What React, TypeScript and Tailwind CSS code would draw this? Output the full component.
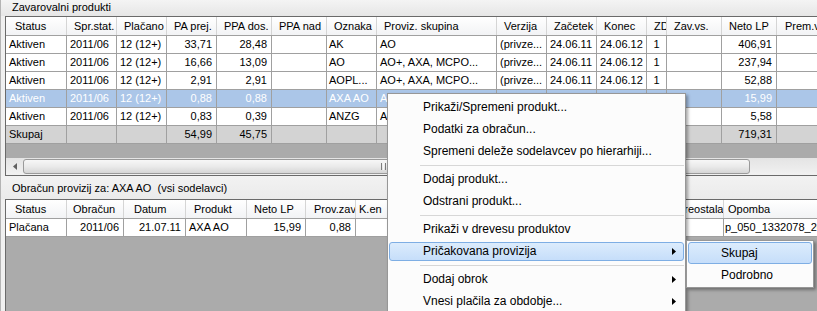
import React from "react";

type Align = "l" | "r" | "c";
type Col = { h: string; w: string; a: Align; hp?: string; cp?: string };
type Row = { kind: "n" | "sel" | "sum"; cells: string[] };

const topCols: Col[] = [
  { h: "Status", w: "w-[61px]", a: "l", hp: "pl-[9px]" },
  { h: "Spr.stat.", w: "w-[50px]", a: "l" },
  { h: "Plačano", w: "w-[50px]", a: "l" },
  { h: "PA prej.", w: "w-[50px]", a: "r" },
  { h: "PPA dos.", w: "w-[55px]", a: "r" },
  { h: "PPA nad", w: "w-[55px]", a: "r" },
  { h: "Oznaka", w: "w-[50px]", a: "l", cp: "pl-[2px]" },
  { h: "Proviz. skupina", w: "w-[120px]", a: "l" },
  { h: "Verzija", w: "w-[50px]", a: "l" },
  { h: "Začetek", w: "w-[50px]", a: "l" },
  { h: "Konec", w: "w-[50px]", a: "l" },
  { h: "ZD", w: "w-[20px]", a: "c" },
  { h: "Zav.vs.", w: "w-[55px]", a: "r" },
  { h: "Neto LP", w: "w-[55px]", a: "r" },
  { h: "Prem.vs.", w: "w-[60px]", a: "r", hp: "pl-[8px]" },
];

const topRows: Row[] = [
  { kind: "n", cells: ["Aktiven", "2011/06", "12 (12+)", "33,71", "28,48", "", "AK", "AO", "(privze...", "24.06.11", "24.06.12", "1", "", "406,91", ""] },
  { kind: "n", cells: ["Aktiven", "2011/06", "12 (12+)", "16,66", "13,09", "", "AO", "AO+, AXA, MCPO...", "(privze...", "24.06.11", "24.06.12", "1", "", "237,94", ""] },
  { kind: "n", cells: ["Aktiven", "2011/06", "12 (12+)", "2,91", "2,91", "", "AOPL...", "AO+, AXA, MCPO...", "(privze...", "24.06.11", "24.06.12", "1", "", "52,88", ""] },
  { kind: "sel", cells: ["Aktiven", "2011/06", "12 (12+)", "0,88", "0,88", "", "AXA AO", "A", "", "", "", "", "", "15,99", ""] },
  { kind: "n", cells: ["Aktiven", "2011/06", "12 (12+)", "0,83", "0,39", "", "ANZG", "A", "", "", "", "", "", "5,58", ""] },
  { kind: "sum", cells: ["Skupaj", "", "", "54,99", "45,75", "", "", "", "", "", "", "", "", "719,31", ""] },
];

const botCols: Col[] = [
  { h: "Status", w: "w-[61px]", a: "l", hp: "pl-[9px]" },
  { h: "Obračun", w: "w-[57px]", a: "r", hp: "pl-[6px]" },
  { h: "Datum", w: "w-[62px]", a: "r", hp: "pl-[10px]" },
  { h: "Produkt", w: "w-[61px]", a: "l", hp: "pl-[8px]" },
  { h: "Neto LP", w: "w-[59px]", a: "r" },
  { h: "Prov.zav", w: "w-[50px]", a: "r", hp: "pl-[8px]" },
  { h: "K.en", w: "w-[60px]", a: "r", hp: "pl-[3px]" },
  { h: "", w: "w-[60px]", a: "r" },
  { h: "", w: "w-[60px]", a: "r" },
  { h: "", w: "w-[70px]", a: "r" },
  { h: "", w: "w-[68px]", a: "r" },
  { h: "Preostala", w: "w-[50px]", a: "r", hp: "pl-[3px]" },
  { h: "Opomba", w: "w-[120px]", a: "l", hp: "pl-[4px]", cp: "pl-[1px]" },
];

const botRows: Row[] = [
  { kind: "n", cells: ["Plačana", "2011/06", "21.07.11", "AXA AO", "15,99", "0,88", "", "", "", "", "", "", "p_050_1332078_2011"] },
];

const alignCls: Record<Align, string> = {
  l: "text-left pl-[3px]",
  r: "text-right pr-[4px]",
  c: "text-center",
};

function Header({ cols }: { cols: Col[] }) {
  return (
    <div className="flex h-[19px] shrink-0 border-b border-[#a0a0a0] bg-linear-to-b from-white to-[#f2f3f5]">
      {cols.map((c, i) => (
        <div
          key={i}
          className={`${c.w} ${c.hp ?? "pl-[7px]"} shrink-0 overflow-hidden whitespace-nowrap border-r border-[#d5d5d5] leading-[18px]`}
        >
          {c.h}
        </div>
      ))}
    </div>
  );
}

function BodyRow({ cols, row }: { cols: Col[]; row: Row }) {
  const bg =
    row.kind === "sel" ? "bg-[#abc6e8] text-white" : row.kind === "sum" ? "bg-[#d3d3d3]" : "bg-white";
  return (
    <div className={`flex h-[18px] shrink-0 border-b border-[#a0a0a0] ${bg}`}>
      {cols.map((c, i) => (
        <div
          key={i}
          className={`${c.w} ${c.cp && c.a === "l" ? c.cp : alignCls[c.a]} ${c.cp && c.a === "l" ? "text-left" : ""} shrink-0 overflow-hidden whitespace-nowrap border-r border-[#a0a0a0] leading-[17px]`}
        >
          {row.cells[i]}
        </div>
      ))}
    </div>
  );
}

function Arrow() {
  return (
    <svg width="4" height="7" viewBox="0 0 4 7" className="absolute right-[8px] top-[8px]">
      <path d="M0 0 L4 3.5 L0 7 Z" fill="#000" />
    </svg>
  );
}

type MItem = { t?: string; sub?: boolean; hl?: boolean; sep?: boolean };

const menuItems: MItem[] = [
  { t: "Prikaži/Spremeni produkt..." },
  { t: "Podatki za obračun..." },
  { t: "Spremeni deleže sodelavcev po hierarhiji..." },
  { sep: true },
  { t: "Dodaj produkt..." },
  { t: "Odstrani produkt..." },
  { sep: true },
  { t: "Prikaži v drevesu produktov" },
  { t: "Pričakovana provizija", sub: true, hl: true },
  { sep: true },
  { t: "Dodaj obrok", sub: true },
  { t: "Vnesi plačila za obdobje...", sub: true },
];

export default function App() {
  return (
    <div className="relative h-[311px] w-[817px] overflow-hidden border-l border-[#b4b4b4] bg-[#f0f0f0] font-['Liberation_Sans',Arial,sans-serif] text-[11px] text-black">
      <div className="flex h-full flex-col">
        {/* top caption */}
        <div className="h-[16px] shrink-0 bg-linear-to-b from-[#f4f4f4] to-[#e6e6e6] pl-[11px] leading-[14px]">
          Zavarovalni produkti
        </div>

        {/* top grid */}
        <div className="ml-[4px] flex h-[160px] shrink-0 flex-col overflow-hidden border-t border-b border-l border-[#6a6a6a] bg-[#ababab]">
          <Header cols={topCols} />
          {topRows.map((r, i) => (
            <BodyRow key={i} cols={topCols} row={r} />
          ))}
          <div className="flex-1" />
          {/* horizontal scrollbar */}
          <div className="flex h-[17px] shrink-0 bg-linear-to-b from-[#e4e4e4] to-[#f1f1f1]">
            <div className="flex w-[17px] shrink-0 items-center justify-center">
              <svg width="4" height="7" viewBox="0 0 4 7">
                <path d="M4 0 L0 3.5 L4 7 Z" fill="#606060" />
              </svg>
            </div>
            <div className="relative mt-[1px] h-[15px] w-[727px] shrink-0 rounded-[3px] border border-[#9a9a9a] bg-linear-to-b from-[#f7f7f7] via-[#eaeaea] to-[#d6d6d6]">
              <div className="absolute left-[357px] top-[3px] flex gap-[1px]">
                <div className="h-[7px] w-px bg-[#7c7c7c]" />
                <div className="h-[7px] w-px bg-[#f8f8f8]" />
                <div className="h-[7px] w-px bg-[#7c7c7c]" />
                <div className="h-[7px] w-px bg-[#f8f8f8]" />
              </div>
            </div>
          </div>
        </div>

        {/* second caption */}
        <div className="h-[23px] shrink-0 whitespace-pre bg-linear-to-b from-[#f2f2f2] to-[#ebebeb] pl-[11px] leading-[24px]">
          Obračun provizij za: AXA AO  (vsi sodelavci)
        </div>

        {/* bottom grid */}
        <div className="ml-[4px] flex flex-1 flex-col overflow-hidden border-t border-l border-[#6a6a6a] bg-[#ababab]">
          <Header cols={botCols} />
          {botRows.map((r, i) => (
            <BodyRow key={i} cols={botCols} row={r} />
          ))}
        </div>
      </div>

      {/* context menu */}
      <div className="absolute left-[386px] top-[93px] h-[240px] w-[299px] border border-[#979797] bg-[#fcfcfc] px-[1px] py-[2px] text-[12px] shadow-[2px_2px_3px_rgba(0,0,0,0.35)]">
        {menuItems.map((m, i) =>
          m.sep ? (
            <div key={i} className="flex h-[6px] items-center pl-[31px]">
              <div className="h-px w-full bg-[#d7d7d7]" />
            </div>
          ) : (
            <div key={i} className="relative h-[22px] whitespace-nowrap pl-[34px] leading-[22px]">
              {m.hl && (
                <div className="absolute inset-x-0 top-[2px] bottom-[1px] rounded-[3px] border border-[#7eaee4] bg-linear-to-b from-[#dcecfc] to-[#c6defa]" />
              )}
              <span className="relative">{m.t}</span>
              {m.sub && <Arrow />}
            </div>
          )
        )}
      </div>

      {/* submenu */}
      <div className="absolute left-[685px] top-[240px] h-[48px] w-[128px] border border-[#979797] bg-[#fcfcfc] p-[1px] text-[12px] shadow-[2px_2px_3px_rgba(0,0,0,0.35)]">
        <div className="relative h-[22px] whitespace-nowrap pl-[33px] leading-[22px]">
          <div className="absolute inset-0 rounded-[3px] border border-[#7eaee4] bg-linear-to-b from-[#dcecfc] to-[#c6defa]" />
          <span className="relative">Skupaj</span>
        </div>
        <div className="relative h-[22px] whitespace-nowrap pl-[33px] leading-[22px]">Podrobno</div>
      </div>
    </div>
  );
}
